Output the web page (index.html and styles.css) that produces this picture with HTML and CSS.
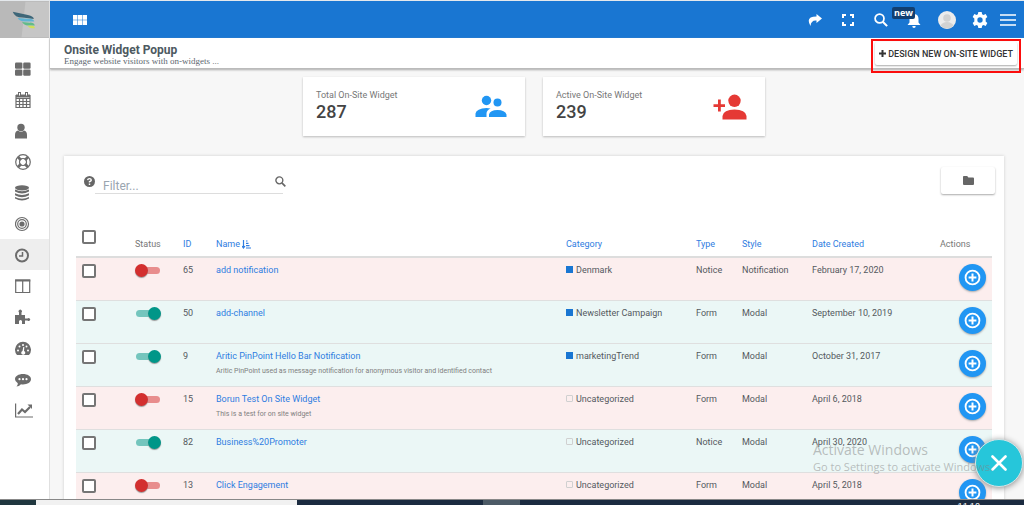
FILE: index.html
```html
<!DOCTYPE html>
<html lang="en">
<head>
<meta charset="utf-8">
<meta name="viewport" content="width=device-width, initial-scale=1">
<title>Onsite Widget Popup</title>
<link rel="stylesheet" href="styles.css">
</head>
<body>
<svg class="sprite" aria-hidden="true">
  <symbol id="plus-circle" viewBox="0 0 24 24"><circle cx="12" cy="12" r="9.8" fill="none" stroke="currentColor" stroke-width="2.6"/><path d="M12 6.500v11M6.500 12h11" stroke="currentColor" stroke-width="2.800"/></symbol>
  <symbol id="search" viewBox="0 0 24 24"><circle cx="9.500" cy="9.500" r="7.600" fill="none" stroke="currentColor" stroke-width="3"/><path d="M15 15l7.500 7.500" stroke="currentColor" stroke-width="3.600"/></symbol>
</svg>
<div class="app">
  <aside class="sidebar">
    <a class="logo" href="#" aria-label="Home">
      <svg viewBox="0 0 50 36" class="logo-art"><path d="M26 0h24v36H22z" fill="#c6c6c6"/><path d="M13 10q2 6 10 6l11.500 1.500q0-2.500-6-4z" fill="#3d6678"/><path d="M18 16.500q2 3.500 7 3.500h10q-1-3-6-2.700z" fill="#5fb4d4"/><path d="M22.500 20.500q2 3.500 6 3.500h7q-1-3-5-2.800z" fill="#62bb8a"/><path d="M28 24.500q2 2.500 4 2.500h3.500q0-2.500-3-2.500z" fill="#cfe05a"/></svg>
    </a>
    <nav class="side-nav">
      <a href="#" aria-label="Dashboard"><svg viewBox="0 0 16 16"><rect x="0" y="1.500" width="7.400" height="6.300" rx="1.200"/><rect x="8.200" y="1.500" width="7.400" height="6.300" rx="1.200"/><rect x="0" y="8.500" width="7.400" height="6.300" rx="1.200"/><rect x="8.200" y="8.500" width="7.400" height="6.300" rx="1.200"/></svg></a>
      <a href="#" aria-label="Calendar"><svg viewBox="0 0 16 16"><path class="line" d="M1 3.500h14v12H1zM1 6.500h14M1 9.500h14M1 12.500h14M4.500 6v9M8 6v9M11.500 6v9"/><path d="M1 2.500h14v3H1zM3 0h3v4.500H3zM10 0h3v4.500h-3z"/><path d="M4.500 1v2.500M11.500 1v2.500" stroke="#fff"/></svg></a>
      <a href="#" aria-label="Contacts"><svg viewBox="0 0 16 16"><circle cx="6" cy="4.500" r="3.700"/><path d="M0 15.500v-3.500q0-4 3-4.500 3 2.500 6 0 3 .5 3 4.500v3.500z"/></svg></a>
      <a href="#" aria-label="Support"><svg viewBox="0 0 16 16"><circle class="line" cx="8" cy="8" r="7.300"/><circle class="line" cx="8" cy="8" r="3.500"/><path d="M2 4l2-2 3 3-2 2zM14 4l-2-2-3 3 2 2zM2 12l2 2 3-3-2-2zM14 12l-2 2-3-3 2-2z"/></svg></a>
      <a href="#" aria-label="Data"><svg viewBox="0 0 16 16"><ellipse cx="7" cy="2.800" rx="7" ry="2.600"/><path d="M0 4.500q7 3.500 14 0v2q-7 4-14 0zM0 8.300q7 3.500 14 0v2q-7 4-14 0zM0 12q7 3.500 14 0v1.500q-7 4-14 0z"/></svg></a>
      <a href="#" aria-label="Targets"><svg viewBox="0 0 16 16"><circle class="line" cx="7" cy="8" r="6.500"/><circle class="line" cx="7" cy="8" r="4.300"/><circle cx="7" cy="8" r="2.600"/></svg></a>
      <a href="#" class="active" aria-label="Recent"><svg viewBox="0 0 16 16"><circle cx="7" cy="8.500" r="6" fill="none" stroke="currentColor" stroke-width="2"/><path d="M7.500 5v4H4" fill="none" stroke="currentColor" stroke-width="1.500"/></svg></a>
      <a href="#" aria-label="Pages"><svg viewBox="0 0 16 16"><path class="line" d="M.7 2h14v12.500h-14zM7.700 2v12"/><path d="M.1 1.500h15.200v2H.1z"/></svg></a>
      <a href="#" aria-label="Plugins"><svg viewBox="0 0 16 16"><path d="M0 6h4V3.500a1.700 1.700 0 1 1 2.500 0V6H10v3.500h2.500a1.500 1.500 0 1 1 0 2H10V15H7v-3q-1.500-2-3 0v3H0z"/></svg></a>
      <a href="#" aria-label="Reports"><svg viewBox="0 0 16 16"><path d="M2 15a8 8 0 1 1 12 0z"/><g fill="#fff"><circle cx="3" cy="10.500" r="1"/><circle cx="4.500" cy="6.500" r="1"/><circle cx="8" cy="5" r="1"/><circle cx="11.500" cy="6.500" r="1"/><circle cx="13" cy="10.500" r="1"/><path d="M8.300 7h1L9 11a2 2 0 1 1-1.500 0z"/></g></svg></a>
      <a href="#" aria-label="Messages"><svg viewBox="0 0 16 16"><path d="M8 3c4.500 0 8 2.200 8 5.200s-3.500 5.200-8 5.200q-1 0-2-.2-2 2.300-4.500 2.300 1.500-1.500 1.300-3.200Q0 10.500 0 8.200C0 5.200 3.500 3 8 3z"/><g fill="#fff"><circle cx="4.500" cy="8.200" r="1.100"/><circle cx="8" cy="8.200" r="1.100"/><circle cx="11.500" cy="8.200" r="1.100"/></g></svg></a>
      <a href="#" aria-label="Analytics"><svg class="wide" viewBox="0 0 18 16"><path class="line" d="M.6 1.500v13.500H18"/><path d="M3 12l4-4.500 3 2.500 5-5" fill="none" stroke="currentColor" stroke-width="2.200"/><path d="M12.500 2.500H17V7z"/></svg></a>
    </nav>
  </aside>

  <div class="main">
    <header class="topbar">
      <button class="icon-btn" aria-label="Apps"><svg width="14" height="10" viewBox="0 0 14 10"><path d="M0 0h4.300v4.700H0zM4.800 0h4.400v4.700H4.800zM9.700 0H14v4.700H9.700zM0 5.300h4.300V10H0zM4.800 5.300h4.400V10H4.800zM9.700 5.300H14V10H9.700z"/></svg></button>
      <div class="top-tools">
        <button class="icon-btn" aria-label="Share"><svg width="14" height="14" viewBox="0 0 14 14"><path d="M8.500 1L14 5.500 8.500 10V7.500Q3 7 2.500 13-3 3.500 8.500 3.500z"/></svg></button>
        <button class="icon-btn" aria-label="Full screen"><svg width="12" height="12" viewBox="0 0 12 12"><path d="M1 4V1h3M8 1h3v3M11 8v3H8M4 11H1V8" fill="none" stroke="currentColor" stroke-width="2"/></svg></button>
        <button class="icon-btn" aria-label="Search"><svg width="14" height="14"><use href="#search"/></svg></button>
        <button class="icon-btn" aria-label="Notifications"><svg width="14" height="16" viewBox="0 0 14 16"><path d="M7 1q1 0 1.200 1.200Q11.500 3 11.500 7v3.500L13.500 13H.5l2-2.500V7q0-4 3.300-4.800Q6 1 7 1zM5.300 14h3.400q0 2-1.700 2t-1.700-2z"/></svg><span class="badge">new</span></button>
        <button class="icon-btn" aria-label="Profile"><svg width="18" height="18" viewBox="0 0 18 18"><circle cx="9" cy="9" r="9" fill="#ececec"/><circle cx="9" cy="7" r="3.800" fill="#d2d2d2"/><path d="M2.500 14.500q2-3.500 6.500-3.500t6.500 3.500q-2 3-6.500 3t-6.500-3z" fill="#d2d2d2"/></svg></button>
        <button class="icon-btn" aria-label="Settings"><svg width="16" height="16" viewBox="0 0 24 24"><path fill-rule="evenodd" d="M9.500 0h5l.7 3.300 2 1.100L20.500 3 23 7.500l-2.500 2.200v4.600L23 16.500 20.500 21l-3.300-1.400-2 1.100-.7 3.300h-5l-.7-3.300-2-1.100L3.500 21 1 16.500l2.500-2.200V9.700L1 7.500 3.500 3l3.300 1.400 2-1.100zM12 8a4 4 0 1 0 0 8 4 4 0 0 0 0-8z"/></svg></button>
        <button class="icon-btn menu" aria-label="Menu"><svg width="16" height="12" viewBox="0 0 16 12"><path d="M0 1h16M0 6h16M0 11h16" stroke="currentColor" stroke-width="1.500"/></svg></button>
      </div>
    </header>

    <div class="page-head">
      <div>
        <h1>Onsite Widget Popup</h1>
        <p>Engage website visitors with on-widgets ...</p>
      </div>
      <div class="highlight"><button class="design-btn"><svg width="7" height="7" viewBox="0 0 7 7"><path d="M3.500 0v7M0 3.500h7" stroke="currentColor" stroke-width="2"/></svg>DESIGN NEW ON-SITE WIDGET</button></div>
    </div>

    <main class="content">
      <section class="stats">
        <div class="stat">
          <div><span>Total On-Site Widget</span><strong>287</strong></div>
          <svg class="blue" width="32" height="24" viewBox="0 0 32 24"><circle cx="11.500" cy="5.500" r="4.700"/><circle cx="22.500" cy="7.500" r="4"/><path d="M.5 22v-3.500q1-5 11-5.500 2 0 4 .5-4 2-4 5V22zM14 22v-2.500q1-4.500 8.500-4.500t9 4.500V22z"/></svg>
        </div>
        <div class="stat">
          <div><span>Active On-Site Widget</span><strong>239</strong></div>
          <svg class="red" width="34" height="26" viewBox="0 0 34 26"><circle cx="21.500" cy="6.800" r="6.200"/><path d="M9.500 25.500V22q1-6.500 12-6.500t12 6.500v3.500zM5 5.500h2.800v4.700H12V13H7.800v4.500H5V13H.5v-2.800H5z"/></svg>
        </div>
      </section>

      <section class="panel">
        <div class="toolbar">
          <div class="filter">
            <svg class="help" width="11" height="11" viewBox="0 0 10 10"><circle cx="5" cy="5" r="5"/><path d="M3.300 3.800Q3.500 2.400 5 2.400t1.600 1.300Q6.500 4.700 5 5.200V6M5 6.900v1.200" fill="none" stroke="#fff" stroke-width="1.300"/></svg>
            <input type="text" placeholder="Filter..." aria-label="Filter">
            <button class="find" aria-label="Search"><svg width="11" height="11"><use href="#search"/></svg></button>
          </div>
          <button class="folder-btn" aria-label="Categories"><svg width="11" height="9" viewBox="0 0 11 9"><path d="M.8 0h3.400L5.400 1.500H10q1 0 1 1V8q0 1-1 1H1Q0 9 0 8V1Q0 0 .8 0z"/></svg></button>
        </div>

        <table>
          <colgroup><col class="c-check"><col class="c-status"><col class="c-id"><col><col class="c-cat"><col class="c-type"><col class="c-style"><col class="c-date"><col class="c-act"></colgroup>
          <thead>
            <tr>
              <th class="pick"><input type="checkbox" class="box" aria-label="Select all"></th>
              <th>Status</th>
              <th><a href="#">ID</a></th>
              <th><a href="#">Name <svg width="9" height="9" viewBox="0 0 9 9"><path d="M1.500 0v8M0 6l1.500 2L3 6M4 1h1.500M4 3.300h2.500M4 5.600h3.500M4 8h5" fill="none" stroke="currentColor" stroke-width="1.200"/></svg></a></th>
              <th><a href="#">Category</a></th>
              <th><a href="#">Type</a></th>
              <th><a href="#">Style</a></th>
              <th><a href="#">Date Created</a></th>
              <th>Actions</th>
            </tr>
          </thead>
          <tbody>
            <tr class="off">
              <td class="pick"><input type="checkbox" class="box" aria-label="Select 65"></td>
              <td><input type="checkbox" class="switch" aria-label="Status of 65"></td>
              <td>65</td>
              <td><a href="#">add notification</a></td>
              <td><span class="swatch filled"></span>Denmark</td>
              <td>Notice</td><td>Notification</td><td>February 17, 2020</td>
              <td class="act"><button class="add" aria-label="Actions for 65"><svg><use href="#plus-circle"/></svg></button></td>
            </tr>
            <tr class="on">
              <td class="pick"><input type="checkbox" class="box" aria-label="Select 50"></td>
              <td><input type="checkbox" class="switch" aria-label="Status of 50" checked></td>
              <td>50</td>
              <td><a href="#">add-channel</a></td>
              <td><span class="swatch filled"></span>Newsletter Campaign</td>
              <td>Form</td><td>Modal</td><td>September 10, 2019</td>
              <td class="act"><button class="add" aria-label="Actions for 50"><svg><use href="#plus-circle"/></svg></button></td>
            </tr>
            <tr class="on">
              <td class="pick"><input type="checkbox" class="box" aria-label="Select 9"></td>
              <td><input type="checkbox" class="switch" aria-label="Status of 9" checked></td>
              <td>9</td>
              <td><a href="#">Aritic PinPoint Hello Bar Notification</a><small>Aritic PinPoint used as message notification for anonymous visitor and identified contact</small></td>
              <td><span class="swatch filled"></span>marketingTrend</td>
              <td>Form</td><td>Modal</td><td>October 31, 2017</td>
              <td class="act"><button class="add" aria-label="Actions for 9"><svg><use href="#plus-circle"/></svg></button></td>
            </tr>
            <tr class="off">
              <td class="pick"><input type="checkbox" class="box" aria-label="Select 15"></td>
              <td><input type="checkbox" class="switch" aria-label="Status of 15"></td>
              <td>15</td>
              <td><a href="#">Borun Test On Site Widget</a><small>This is a test for on site widget</small></td>
              <td><span class="swatch"></span>Uncategorized</td>
              <td>Form</td><td>Modal</td><td>April 6, 2018</td>
              <td class="act"><button class="add" aria-label="Actions for 15"><svg><use href="#plus-circle"/></svg></button></td>
            </tr>
            <tr class="on">
              <td class="pick"><input type="checkbox" class="box" aria-label="Select 82"></td>
              <td><input type="checkbox" class="switch" aria-label="Status of 82" checked></td>
              <td>82</td>
              <td><a href="#">Business%20Promoter</a></td>
              <td><span class="swatch"></span>Uncategorized</td>
              <td>Notice</td><td>Modal</td><td>April 30, 2020</td>
              <td class="act"><button class="add" aria-label="Actions for 82"><svg><use href="#plus-circle"/></svg></button></td>
            </tr>
            <tr class="off">
              <td class="pick"><input type="checkbox" class="box" aria-label="Select 13"></td>
              <td><input type="checkbox" class="switch" aria-label="Status of 13"></td>
              <td>13</td>
              <td><a href="#">Click Engagement</a></td>
              <td><span class="swatch"></span>Uncategorized</td>
              <td>Form</td><td>Modal</td><td>April 5, 2018</td>
              <td class="act"><button class="add" aria-label="Actions for 13"><svg><use href="#plus-circle"/></svg></button></td>
            </tr>
          </tbody>
        </table>
      </section>
    </main>
  </div>

  <button class="close-fab" aria-label="Close"><svg width="16" height="16" viewBox="0 0 16 16"><path d="M1.500 1.500l13 13M14.500 1.500l-13 13" stroke="currentColor" stroke-width="2.600" stroke-linecap="round"/></svg></button>
  <div class="watermark"><b>Activate Windows</b><span>Go to Settings to activate Windows.</span></div>
</div>
<footer class="taskbar"><div class="task-start"></div><div class="task-search"></div><div class="task-apps"><span></span></div><time>11:18</time></footer>
</body>
</html>
```
FILE: styles.css
```css
* { box-sizing: border-box; }
body {
  margin: 0;
  height: 100vh;
  display: flex;
  flex-direction: column;
  overflow: hidden;
  border-top: 1px solid #e4e8ec;
  background: #f7f7f7;
  color: #54595e;
  font: 9px/12px Roboto, "Liberation Sans", sans-serif;
}
button, input { font: inherit; color: inherit; margin: 0; }
button { border: 0; padding: 0; background: none; cursor: pointer; }
a { color: #2f7de1; text-decoration: none; }
svg { display: block; fill: currentColor; }
.sprite { position: absolute; width: 0; height: 0; }

.app { position: relative; flex: 1; min-height: 0; display: flex; overflow: hidden; }

.sidebar { width: 50px; flex: none; background: #fff; border-right: 1px solid #e0e0e0; }
.logo { display: block; height: 37px; background: #b9b9b9; overflow: hidden; }
.logo-art { width: 100%; height: 100%; }
.side-nav { padding-top: 15px; }
.side-nav a { display: flex; align-items: center; height: 31px; padding-left: 15px; color: #6c6c6c; }
.side-nav a.active { background: #eee; }
.side-nav svg { width: 16px; height: 16px; }
.side-nav svg.wide { width: 18px; }
.line { fill: none; stroke: currentColor; stroke-width: 1.2; }

.main { flex: 1; min-width: 0; display: flex; flex-direction: column; }
.topbar {
  flex: none;
  display: flex;
  align-items: center;
  justify-content: space-between;
  height: 37px;
  padding: 0 4px 0 23px;
  background: #1976d2;
  color: #fff;
}
.icon-btn { color: #fff; }
.top-tools { display: flex; align-items: center; }
.top-tools .icon-btn { position: relative; display: flex; justify-content: center; width: 33px; }
.top-tools .menu { width: 24px; }
.badge {
  position: absolute;
  right: 15px;
  top: -5px;
  padding: 0 2px;
  border-radius: 2px;
  background: #123f70;
  color: #fff;
  font: bold 9px/12px "Open Sans", sans-serif;
}

.page-head {
  flex: none;
  display: flex;
  justify-content: space-between;
  height: 31px;
  padding-left: 14px;
  background: #fff;
  border-bottom: 1px solid #bbb;
  box-shadow: 0 1px 2px #aaa;
}
.page-head h1 { margin: 6px 0 0; font-size: 12px; line-height: 13px; font-weight: 700; color: #4d5961; }
.page-head p { margin: 0; font: 9px/9px "Liberation Serif", serif; color: #5d6870; }
.highlight { z-index: 1; align-self: flex-start; height: 34px; margin: 1px 3px 0 0; padding: 1px 2px 0; border: 2px solid #fb0d0d; }
.design-btn {
  display: flex;
  align-items: center;
  gap: 2px;
  height: 23px;
  padding: 0 4px;
  border-radius: 2px;
  background: #fff;
  box-shadow: 0 1px 2px #aaa;
  color: #333;
  font-weight: 500;
  white-space: nowrap;
}

.content { flex: 1; padding: 8px 20px 0 14px; }
.stats { display: flex; justify-content: center; gap: 18px; }
.stat {
  display: flex;
  justify-content: space-between;
  align-items: center;
  width: 222px;
  height: 59px;
  padding: 0 18px 2px 13px;
  background: #fff;
  box-shadow: 0 1px 2px #bbb;
}
.stat span { display: block; font-size: 9px; line-height: 12px; color: #777; }
.stat strong { display: block; font-size: 18px; line-height: 22px; font-weight: 500; color: #444; }
.stat svg { margin-top: 2px; }
.blue { color: #2196f3; }
.red { color: #e53935; }

.panel { margin-top: 20px; padding: 11px 12px 0; background: #fff; box-shadow: 0 0 3px #ccc; }
.toolbar { display: flex; justify-content: space-between; align-items: flex-start; height: 61px; }
.filter { display: flex; align-items: flex-start; padding: 9px 0 0 8px; color: #666; }
.filter input {
  width: 188px;
  height: 18px;
  padding: 2px 30px 0 8px;
  border: 0;
  border-bottom: 1px solid #ddd;
  background: none;
  font-size: 12px;
  outline: 0;
}
.filter input::placeholder { color: #9aa5b0; }
.find { margin-left: -8px; }
.folder-btn {
  display: flex;
  justify-content: center;
  align-items: center;
  width: 54px;
  height: 27px;
  border-radius: 2px;
  box-shadow: 0 1px 2px #aaa;
  color: #666;
  margin-right: -3px;
}

table { width: 100%; table-layout: fixed; border-collapse: separate; border-spacing: 0; }
.c-check { width: 59px; }
.c-status { width: 48px; }
.c-id { width: 33px; }
.c-cat { width: 130px; }
.c-type { width: 46px; }
.c-style { width: 70px; }
.c-date { width: 128px; }
.c-act { width: 52px; }
th, td { padding: 0; text-align: left; vertical-align: top; white-space: nowrap; font-weight: 400; }
th { height: 30px; padding-top: 10px; border-bottom: 2px solid #ddd; color: #777; }
th a svg { display: inline-block; vertical-align: -2px; }
th.pick { padding: 2px 0 0 6px; }
td { height: 43px; padding-top: 6px; border-bottom: 1px solid #dfdfdf; }
td.pick { padding: 6px 0 0 6px; }
td.act { padding: 6px 6px 0 0; }
tr.off { background: #fceeee; }
tr.on { background: #ebf7f6; }
td small { display: block; margin-top: 5px; font-size: 7px; line-height: 9px; color: #808080; }
.box { display: block; appearance: none; width: 14px; height: 14px; border: 2px solid #757575; border-radius: 2px; background: #fff; }
.box:checked { background: #2196f3; }
.switch { position: relative; display: block; appearance: none; width: 26px; height: 13px; }
.switch::before {
  content: "";
  position: absolute;
  inset: 3px 1px;
  border-radius: 4px;
  background: #e88d8d;
}
.switch::after {
  content: "";
  position: absolute;
  left: 0;
  top: 0;
  width: 13px;
  height: 13px;
  border-radius: 50%;
  background: #d32f2f;
  box-shadow: 0 1px 1px #999;
}
.switch:checked::before { background: #74c5bd; }
.switch:checked::after { left: 13px; background: #009688; }
.swatch { display: inline-block; width: 7px; height: 7px; margin-right: 3px; border: 1px solid #d0d0d0; border-radius: 1px; }
.swatch.filled { border-color: #1976d2; background: #1976d2; border-radius: 0; }
.add {
  display: flex;
  justify-content: center;
  align-items: center;
  width: 27px;
  height: 27px;
  margin-left: auto;
  border-radius: 50%;
  background: #2196f3;
  box-shadow: 0 1px 2px #aaa;
  color: #fff;
}
.add svg { width: 17px; height: 17px; }

.watermark { position: absolute; left: 813px; bottom: 24px; color: rgba(130, 130, 130, .5); pointer-events: none; font-family: "Open Sans", sans-serif; white-space: nowrap; }
.watermark b { display: block; font-size: 14px; line-height: 18px; font-weight: 400; }
.watermark span { display: block; font-size: 11px; line-height: 16px; }
.close-fab {
  position: absolute;
  right: 1px;
  bottom: 12px;
  display: flex;
  justify-content: center;
  align-items: center;
  width: 48px;
  height: 48px;
  border: 1px solid #d5e4e6;
  border-radius: 50%;
  background: #26c6da;
  box-shadow: 0 1px 6px #888;
  color: #fff;
}

.taskbar { flex: none; display: flex; height: 6px; border-top: 1px solid #888; background: #1b2b40; overflow: hidden; }
.task-start { width: 36px; background: #20373f; }
.task-search { width: 261px; background: #f1f1f1; }
.task-apps { flex: 1; padding-left: 186px; }
.task-apps span { display: block; width: 37px; height: 100%; background: #4c5a66; }
.taskbar time { margin-right: 44px; padding-top: 2px; color: #fff; line-height: 10px; }
```
